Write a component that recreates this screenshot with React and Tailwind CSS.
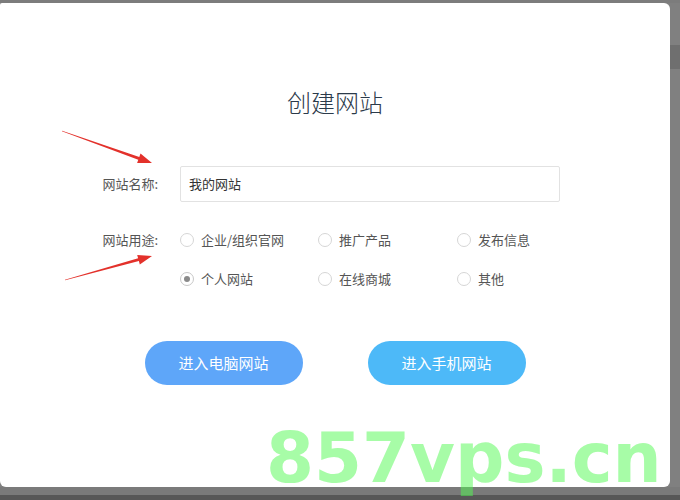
import React from "react";

const cjk = { fontFamily: '"Noto Sans CJK SC", "Noto Sans", sans-serif' };

function Radio({ label, checked }) {
  return (
    <div className="flex items-center h-[20px]">
      <span
        className={
          "w-[14px] h-[14px] rounded-full border flex items-center justify-center shrink-0 " +
          (checked ? "border-[#c8c8c8]" : "border-[#d6d6d6]")
        }
      >
        {checked && <span className="w-[6px] h-[6px] rounded-full bg-[#8a8a8a]" />}
      </span>
      <span className="ml-[7px] text-[13px] text-[#555] leading-[20px]">{label}</span>
    </div>
  );
}

export default function App() {
  return (
    <div className="relative w-[680px] h-[500px] bg-[#808080] flex flex-col overflow-hidden" style={cjk}>
      <div className="h-[3px] bg-[#7c7c7c]" />
      <div className="flex h-[484px]">
        <div className="w-[670px] h-[484px] bg-white rounded-[6px] rounded-tl-[2px] flex flex-col items-stretch pt-[83px]">
          <h1 className="text-center text-[24px] leading-[32px] text-[#2b3a4a] font-light">创建网站</h1>

          <div className="flex items-center mt-[48px]">
            <div className="w-[160px] text-right text-[13px] text-[#555] pr-[2px]">网站名称:</div>
            <div className="ml-[20px] w-[380px] h-[36px] border border-[#e2e2e2] rounded-[2px] flex items-center px-[8px] text-[13px] text-[#333]">
              我的网站
            </div>
          </div>

          <div className="flex items-start mt-[28px]">
            <div className="w-[160px] text-right text-[13px] text-[#555] leading-[20px] pr-[2px]">网站用途:</div>
            <div className="ml-[20px] grid grid-cols-[138px_139px_120px] gap-y-[19px]">
              <Radio label="企业/组织官网" />
              <Radio label="推广产品" />
              <Radio label="发布信息" />
              <Radio label="个人网站" checked />
              <Radio label="在线商城" />
              <Radio label="其他" />
            </div>
          </div>

          <div className="flex justify-center gap-[65px] mt-[52px]">
            <button className="w-[158px] h-[44px] rounded-full bg-[#5ea6f9] text-white text-[15px]">进入电脑网站</button>
            <button className="w-[158px] h-[44px] rounded-full bg-[#4db9f8] text-white text-[15px]">进入手机网站</button>
          </div>
        </div>
        <div className="w-[10px] flex flex-col">
          <div className="h-[42px] bg-[#808080]" />
          <div className="h-[24px] bg-[#6f6f6f]" />
          <div className="flex-1 bg-[#808080]" />
        </div>
      </div>
      <div className="h-[8px] bg-[#7a7a7a]" />
      <div className="h-[5px] bg-[#575757]" />

      <svg className="absolute inset-0 pointer-events-none" width="680" height="500" viewBox="0 0 680 500">
        <polygon
          fill="#e3312b"
          points="62.1,130.7 139.3,156.9 140.5,153.6 152,163 137.1,163 138.3,159.7 61.9,131.3"
        />
        <polygon
          fill="#e3312b"
          points="64.9,279.7 138.1,258.3 137.2,254.9 152,256 139.8,264.5 138.9,261.1 65.1,280.3"
        />
      </svg>

      <div
        className="absolute left-[266px] top-[424px] text-[69px] font-bold leading-none text-[rgba(80,250,80,0.5)] whitespace-nowrap pointer-events-none"
        style={{ fontFamily: '"DejaVu Sans", sans-serif' }}
      >
        857vps.cn
      </div>
    </div>
  );
}
